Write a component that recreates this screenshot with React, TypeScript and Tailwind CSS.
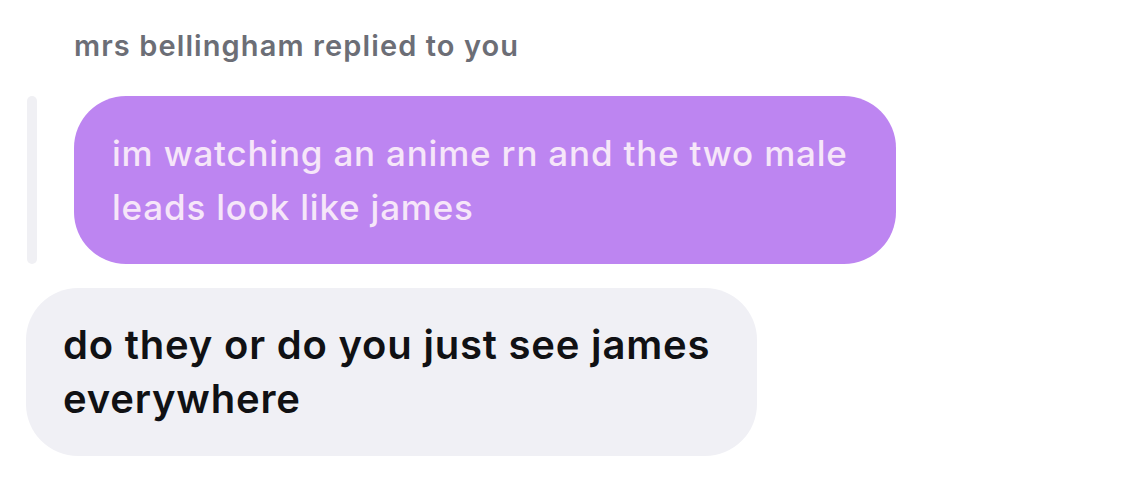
import React from 'react';

const App: React.FC = () => {
  return (
    <div className="w-[1148px] h-[500px] bg-white font-['Inter',sans-serif]">
      {/* reply header */}
      <div className="pt-[29px] pl-[74px] text-[29px] leading-[34px] font-semibold tracking-[1.1px] text-[#6c6e76]">
        mrs bellingham replied to you
      </div>

      {/* quoted message */}
      <div className="flex mt-[33px] pl-[27px] gap-[37px]">
        <div className="w-[10px] h-[168px] rounded-full bg-[#f0f0f4]"></div>
        <div className="w-[822px] h-[168px] rounded-[52px] bg-[#bd85f1] px-[38px] py-[30px] text-[35px] leading-[54px] font-medium tracking-[0.8px] text-[#f6e6f9]">
          im watching an anime rn and the two male leads look like james
        </div>
      </div>

      {/* reply */}
      <div className="mt-[24px] ml-[26px] w-[731px] h-[168px] rounded-[52px] bg-[#f0f0f5] px-[37px] py-[30px] text-[40px] leading-[54px] font-semibold tracking-[0.8px] text-[#101114]">
        do they or do you just see james everywhere
      </div>
    </div>
  );
};

export default App;
